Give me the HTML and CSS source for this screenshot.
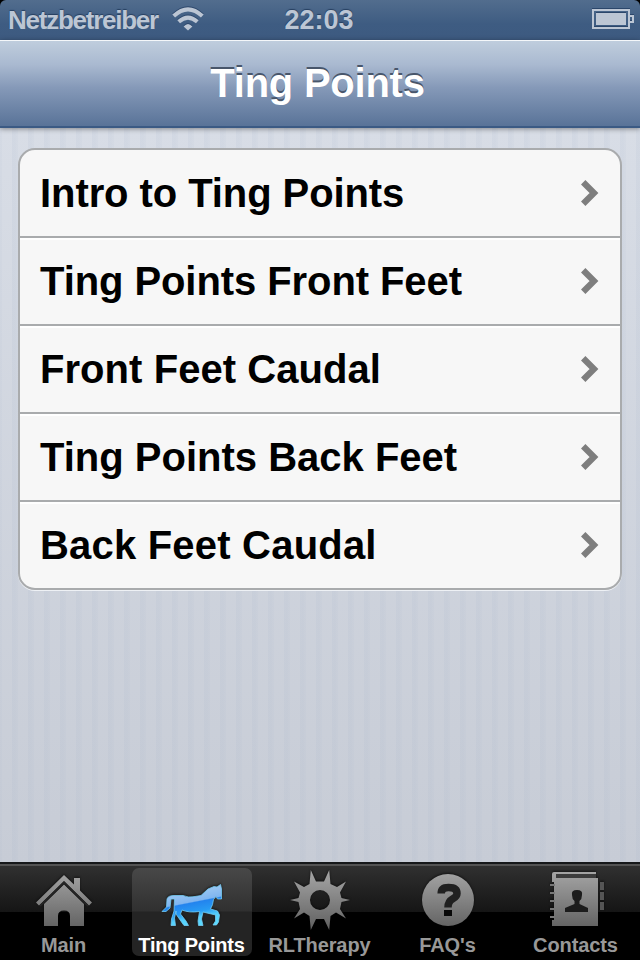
FILE: index.html
```html
<!DOCTYPE html>
<html lang="en">
<head>
<meta charset="utf-8">
<title>Ting Points</title>
<link rel="stylesheet" href="styles.css">
</head>
<body>
<div class="screen">
  <header class="status">
    <div class="carrier"><span class="carrier-name">Netzbetreiber</span>
      <svg class="wifi" viewBox="171 7 34 26"><g fill="none" stroke="#bcc6d4" stroke-width="4"><path d="M173.7 17Q188 3.6 202.3 17"/><path d="M178.7 22.8Q188 14.4 197.3 22.8"/></g><path d="M183.6 27.4Q188 22.4 192.4 27.4L188 31.6Z" fill="#bcc6d4"/></svg>
    </div>
    <time class="clock">22:03</time>
    <svg class="battery" viewBox="592 9 42 20"><path d="M593 10H629V28H593Z" fill="none" stroke="#bcc6d4" stroke-width="2"/><path d="M596 13H626V25H596Z" fill="#bcc6d4"/><path d="M630 16H633V22H630" fill="none" stroke="#bcc6d4" stroke-width="2"/></svg>
  </header>
  <div class="navbar"><h1>Ting Points</h1></div>
  <main class="content">
    <ul class="list">
      <li><span class="t1">Intro to Ting Points</span><svg viewBox="0 0 18 26"><path d="M2.2 2.2L13 13L2.2 23.8"/></svg></li>
      <li><span class="t2">Ting Points Front Feet</span><svg viewBox="0 0 18 26"><path d="M2.2 2.2L13 13L2.2 23.8"/></svg></li>
      <li><span class="t3">Front Feet Caudal</span><svg viewBox="0 0 18 26"><path d="M2.2 2.2L13 13L2.2 23.8"/></svg></li>
      <li><span class="t4">Ting Points Back Feet</span><svg viewBox="0 0 18 26"><path d="M2.2 2.2L13 13L2.2 23.8"/></svg></li>
      <li><span class="t5">Back Feet Caudal</span><svg viewBox="0 0 18 26"><path d="M2.2 2.2L13 13L2.2 23.8"/></svg></li>
    </ul>
  </main>
  <nav class="tabs">
    <a class="tab"><svg viewBox="32 868 64 64">
      <defs><linearGradient id="gray" gradientUnits="userSpaceOnUse" x1="0" y1="872" x2="0" y2="928"><stop offset="0" stop-color="#a4a4a4"/><stop offset="1" stop-color="#626262"/></linearGradient></defs>
      <path fill="url(#gray)" d="M64 884.5L84 904V926H70V916Q70 910.5 64 910.5Q58 910.5 58 916V926H44V904Z"/>
      <path fill="url(#gray)" d="M64 875L74 884.5V878H80V890.5L92 902.5L89 905.5L64 881L39 905.5L36 902.5Z"/>
      <path fill="none" stroke="#262626" stroke-width="1.6" d="M40 906L64 882.4L88 906"/></svg><span>Main</span></a>
    <a class="tab selected"><svg viewBox="160 868 64 64">
      <defs><linearGradient id="blue" gradientUnits="userSpaceOnUse" x1="190" y1="885" x2="198" y2="926"><stop offset="0" stop-color="#a9cff3"/><stop offset=".4" stop-color="#7fb5f0"/><stop offset=".43" stop-color="#2384ee"/><stop offset=".65" stop-color="#279bf3"/><stop offset=".8" stop-color="#55d0fb"/><stop offset="1" stop-color="#5bdcff"/></linearGradient></defs>
      <path fill="url(#blue)" stroke="#74cbf4" stroke-width=".8" stroke-linejoin="round" d="M220.500 884.500L221.500 889V899H217.500L216 896.500L213.500 899.500Q213 905 210.500 909L217.500 911L219.500 915L218.500 922L216.500 925H213L215.500 921V915L207 913L203 912L201.500 919L203 925.500H198.500L198 921L199.500 911.500Q189 913 182 910L180.500 914L186 921L188.500 925.500H184L181.500 922L176 914V911L174.500 918L175.500 925.500H171L171.500 919L174 911L174.500 899L171 899L170 908L166 911.500H162L166.500 907L167 899Q168 895.500 174 895.500L183 895.500Q188 898 195 896.500L201 895.500L208 889L214 886.500L217 887Z"/></svg><span>Ting Points</span></a>
    <a class="tab"><svg viewBox="288 868 64 64"><path fill="url(#gray)" fill-rule="evenodd" d="M310.800 870L316 881.500H324L329.200 870L330.500 884L337 887L346 881.500L340 892.500L341.500 898L350 900L341.500 902L340 909L346 918.500L336 912.500L330.500 916L329.200 930L324 919H316L310.800 930L309.500 916L304 912.500L294 918.500L300 909L298.500 902L290 900L298.500 898L300 892.500L294 881.500L304 887L309.500 884ZM330 900A10 10 0 1 0 310 900A10 10 0 1 0 330 900Z"/></svg><span>RLTherapy</span></a>
    <a class="tab"><svg viewBox="416 868 64 64"><circle cx="448" cy="900" r="26" fill="url(#gray)"/><path d="M441.200 893.500Q441.200 887.500 448.500 887.500Q457 887.500 457 893.500Q457 896.500 452.500 899Q448 901.500 448 907.500" fill="none" stroke="#202020" stroke-width="7.500"/><path d="M444 910H452V916H444Z" fill="#080808"/></svg><span>FAQ's</span></a>
    <a class="tab"><svg viewBox="544 868 64 64"><path fill="url(#gray)" d="M554 872H596V874H556V878H598V926H552V924H555.500V872Z"/><path d="M552 874Q552 872 554 872H557V926H554Q552 926 552 924V920H554V882H552Z" fill="url(#gray)"/><path d="M556 874H596V878H556Z" fill="#3c3c3c"/>
      <path d="M550 885H555M550 893H555M550 901H555M550 909H555M550 917H555" stroke="#777" stroke-width="2"/><path d="M600 882H604V890H600ZM600 892H604V900H600ZM600 902H604V910H600Z" fill="#555"/><path d="M572 895Q571 890 577 890Q583 890 582 895Q582 899 579.500 901V904L588 908V912H565V908L574.500 904V901Q572 899 572 895Z" fill="#1c1c1c"/></svg><span>Contacts</span></a>
  </nav>
</div>
</body>
</html>
```
FILE: styles.css
```css
* { box-sizing: border-box; }
body { margin: 0; background: #000; font-family: "Liberation Sans", Arial, sans-serif; font-weight: 700; }
.screen { width: 640px; height: 960px; display: flex; flex-direction: column; overflow: hidden; }
.status { height: 40px; display: grid; grid-template-columns: 1fr auto 1fr; align-items: center; padding: 0 6px 2px 8px; border-radius: 6px 6px 0 0; background: linear-gradient(#526d8e, #3e5c82 60%, #3d5a80); color: #bcc6d4; font-size: 26px; text-shadow: 0 -1px 1px #263f60; }
.carrier { display: flex; align-items: center; gap: 13px; }
.carrier-name { letter-spacing: -1.25px; padding-top: 2px; }
.wifi { width: 34px; height: 26px; filter: drop-shadow(0 -1px 0 #2b466a); }
.clock { padding: 2px 4px 0 0; font-size: 27px; }
.battery { width: 42px; height: 20px; justify-self: end; filter: drop-shadow(0 -1px 0 #2b466a); }
.navbar { height: 88px; flex: none; display: flex; justify-content: center; border-top: 1px solid #f4f7fa; border-bottom: 2px solid #3b5a84; background: linear-gradient(#bfcddd, #a9b9d0 28%, #8599b8 55%, #597398); position: relative; box-shadow: 0 1px 5px #0006; }
h1 { margin: 0 5px 0 0; color: #fff; font-size: 40px; letter-spacing: -.25px; line-height: 84px; text-shadow: 0 -2px 0 #48566b; }
.content { flex: 1; padding: 20px 18px; background: repeating-linear-gradient(90deg, #9aabc510 0 2px, #0000 2px 12px, #9aabc518 12px 16px), linear-gradient(#d8dde6, #c7ccd6); }
.list { list-style: none; margin: 0; padding: 0; background: #f7f7f7; border: 2px solid #a9abad; border-radius: 17px; box-shadow: 0 1px 0 #eef1f5; overflow: hidden; }
.list li { height: 88px; display: flex; align-items: center; justify-content: space-between; padding: 0 21px 0 20px; border-bottom: 2px solid #a9abad; }
.list li + li { box-shadow: inset 0 2px 0 #fff; }
.list li:last-child { height: 86px; border-bottom: 0; }
.list span { font-size: 40px; line-height: 84px; white-space: nowrap; }
.list .t1, .list .t2 { letter-spacing: -.08px; }
.list .t3 { letter-spacing: .06px; }
.list .t5 { letter-spacing: .2px; }
.list svg { width: 18px; height: 26px; fill: none; stroke: #7e7e7e; stroke-width: 6.2; }
.tabs { height: 98px; flex: none; display: grid; grid-template-columns: repeat(5, 128px); background: linear-gradient(#16181a 0 2px, #535353 2px 4px, #303030 4px, #151515 50px, #000 50px); }
.tab { height: 88px; display: flex; flex-direction: column; align-items: center; margin: 6px 4px 0; color: #989898; font-size: 20px; border-radius: 7px; }
.tab svg { width: 64px; height: 64px; flex: none; filter: drop-shadow(0 -1px 1px #0008); }
.tab span { line-height: 26px; letter-spacing: -.1px; white-space: nowrap; margin-right: 1px; }
.selected { color: #fff; background: linear-gradient(#484848, #303030 43px, #242424 44px); }
.selected span { letter-spacing: -.2px; }
```
